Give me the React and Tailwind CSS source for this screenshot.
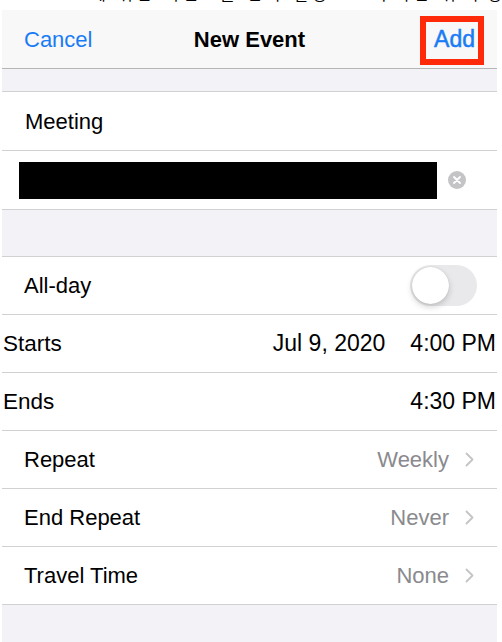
import React from 'react';

const FONT = { fontFamily: '"Liberation Sans", Arial, "Noto Sans CJK KR", sans-serif' };

function Chevron() {
  return (
    <svg width="9" height="15" viewBox="0 0 9 15" className="ml-[16px]">
      <path d="M1.5 1.5 L7.5 7.5 L1.5 13.5" fill="none" stroke="#c4c4c7" strokeWidth="1.8" strokeLinecap="round" strokeLinejoin="round" />
    </svg>
  );
}

function Row({ label, value, h = 'h-[58px]' }) {
  return (
    <div className={`flex items-center justify-between ${h} border-b border-[#d1d1d4] bg-white pl-[22px] pr-[23px]`}>
      <span className="text-[22px] text-black">{label}</span>
      <div className="flex items-center">
        <span className="text-[22px] text-[#8a8a8e]">{value}</span>
        <Chevron />
      </div>
    </div>
  );
}

export default function App() {
  return (
    <div className="w-[502px] h-[642px] bg-white overflow-hidden" style={FONT}>
      {/* clipped tail of text above the screenshot */}
      <div className="h-[10px] overflow-hidden bg-white">
        <div className="-mt-[14px] whitespace-nowrap text-[16px] leading-[17px] text-black">
          <span className="font-bold">Functional</span>
          <span className="ml-[10px] tracking-[4px]">에 위한 이벤트를 반복 일정으로 추가한 뒤 수정 버튼을 확인</span>
        </div>
      </div>

      <div className="ml-[2px] w-[495px] h-[632px] bg-[#f2f2f7]">
        {/* nav bar */}
        <div className="relative flex items-center justify-between h-[59px] border-b border-[#b5b5b5] bg-[#f8f8f8] pl-[22px] pr-[22px]">
          <span className="text-[22px] text-[#1a7cf5]">Cancel</span>
          <span className="absolute left-1/2 -translate-x-1/2 text-[22px] font-bold text-black">New Event</span>
          <span className="text-[23px] text-[#1a7cf5] [-webkit-text-stroke:0.5px_#1a7cf5]">Add</span>
          <div className="absolute left-[418px] top-[6px] w-[64px] h-[49px] border-[6px] border-[#ff2a0a]" />
        </div>

        <div className="h-[23px] border-b border-[#d1d1d4]" />

        <div className="flex items-center h-[59px] border-b border-[#d1d1d4] bg-white pl-[23px]">
          <span className="text-[22px] text-black">Meeting</span>
        </div>
        <div className="flex items-center h-[59px] border-b border-[#d1d1d4] bg-white pl-[17px] pr-[29px]">
          <div className="w-[418px] h-[37px] bg-black" />
          <div className="ml-[11px] w-[18px] h-[18px] rounded-full bg-[#c4c4c7] flex items-center justify-center">
            <svg width="8" height="8" viewBox="0 0 8 8">
              <path d="M1 1 L7 7 M7 1 L1 7" stroke="white" strokeWidth="1.8" strokeLinecap="round" />
            </svg>
          </div>
        </div>

        <div className="h-[47px] border-b border-[#d1d1d4]" />

        <div className="flex items-center justify-between h-[58px] border-b border-[#d1d1d4] bg-white pl-[22px] pr-[20px]">
          <span className="text-[22px] text-black">All-day</span>
          <div className="relative w-[67px] h-[41px] rounded-full bg-[#e9e9eb]">
            <div className="absolute left-[2px] top-[2px] w-[37px] h-[37px] rounded-full bg-white shadow-[0_3px_6px_rgba(0,0,0,0.18),0_0_1px_rgba(0,0,0,0.2)]" />
          </div>
        </div>

        <div className="flex items-center justify-between h-[58px] border-b border-[#d1d1d4] bg-white pl-[1px] pr-[1px]">
          <span className="text-[22.5px] text-black">Starts</span>
          <div className="flex items-center text-[23px] text-black">
            <span>Jul 9, 2020</span>
            <span className="ml-[25px]">4:00 PM</span>
          </div>
        </div>
        <div className="flex items-center justify-between h-[58px] border-b border-[#d1d1d4] bg-white pl-[1px] pr-[1px]">
          <span className="text-[22.5px] text-black">Ends</span>
          <span className="text-[23px] text-black">4:30 PM</span>
        </div>

        <Row label="Repeat" value="Weekly" />
        <Row label="End Repeat" value="Never" />
        <Row label="Travel Time" value="None" />
      </div>
    </div>
  );
}
